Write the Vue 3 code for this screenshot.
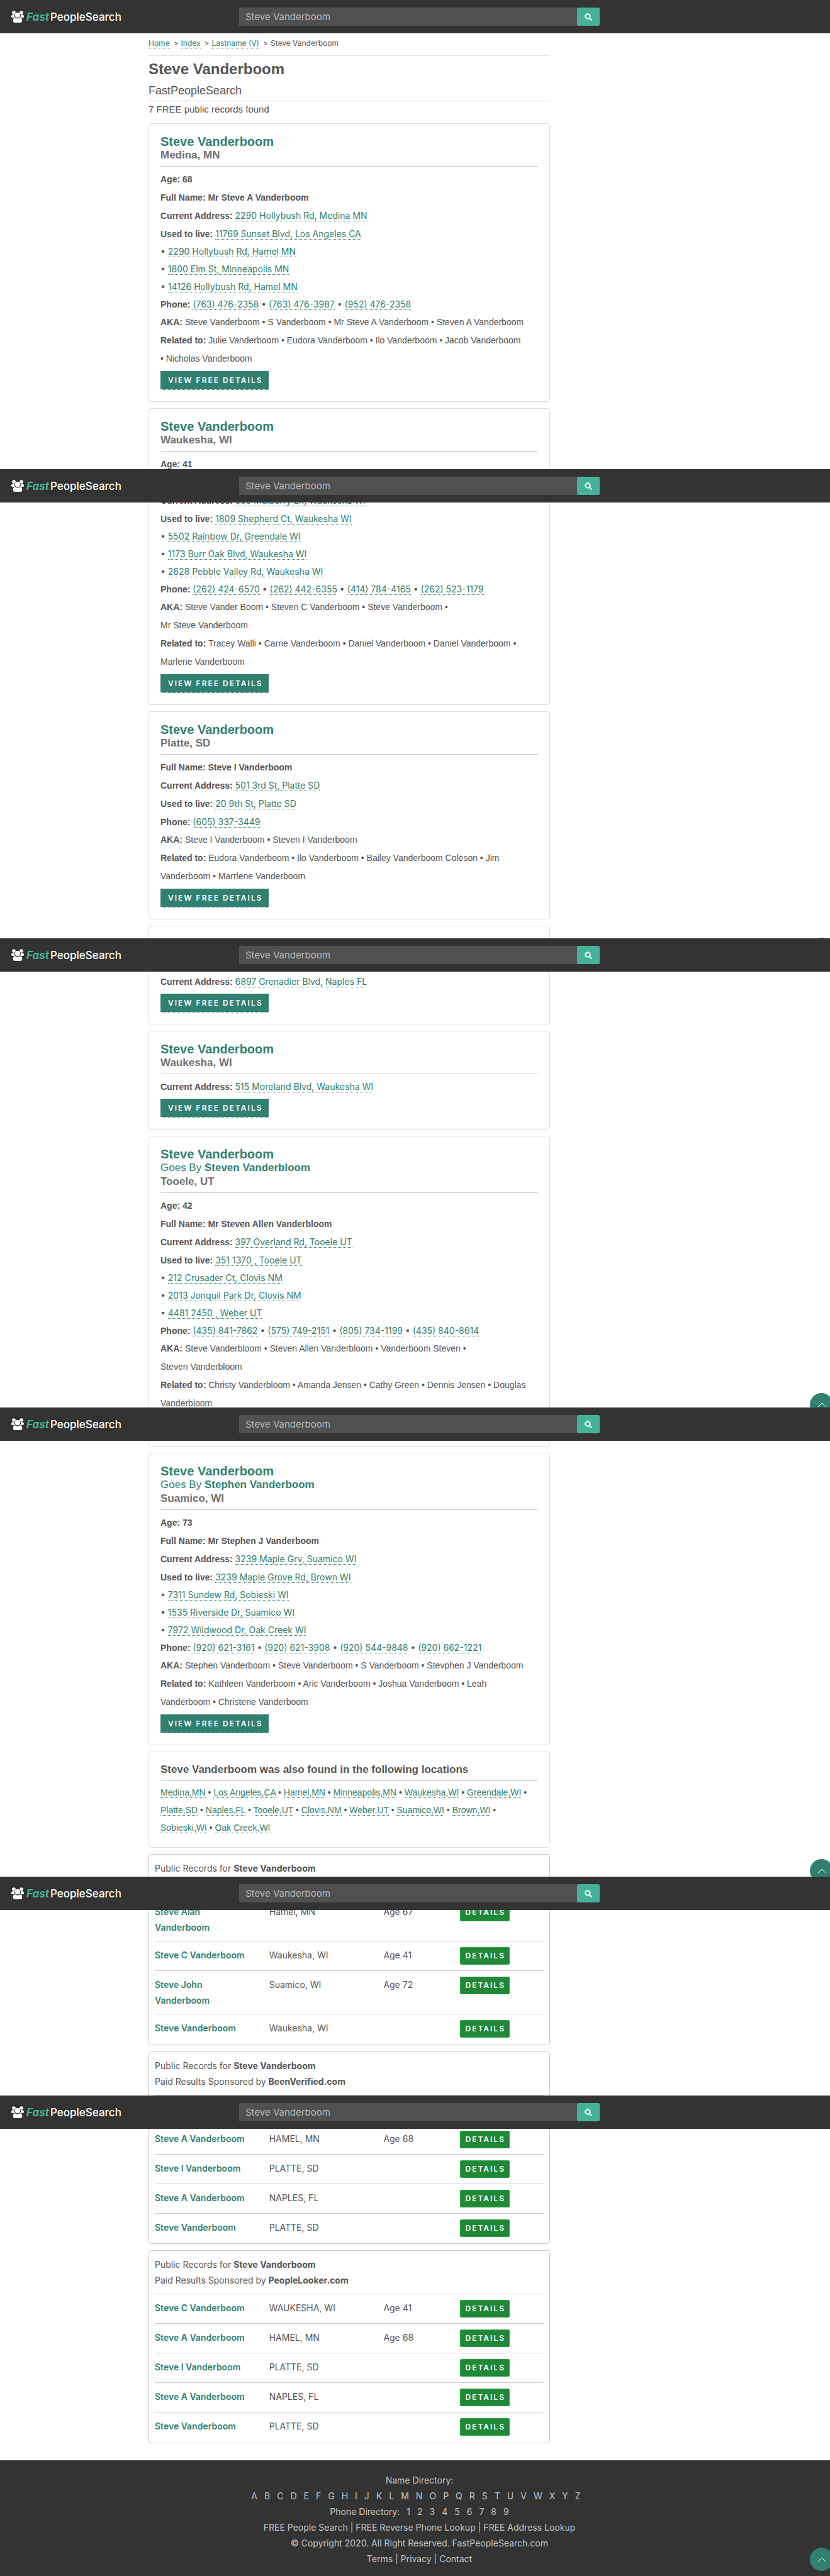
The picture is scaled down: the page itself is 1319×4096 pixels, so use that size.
<script setup>
const barTops = [0, 746, 1492, 2238, 2984, 3332]
const topButtons = [1491, 2215, 2956, 4051]

const people = [
  {
    name: 'Steve Vanderboom', place: 'Medina, MN', age: '68', full: 'Mr Steve A Vanderboom',
    current: '2290 Hollybush Rd, Medina MN',
    past: ['11769 Sunset Blvd, Los Angeles CA', '2290 Hollybush Rd, Hamel MN', '1800 Elm St, Minneapolis MN', '14126 Hollybush Rd, Hamel MN'],
    phones: ['(763) 476-2358', '(763) 476-3987', '(952) 476-2358'],
    aka: ['Steve Vanderboom', 'S Vanderboom', 'Mr Steve A Vanderboom', 'Steven A Vanderboom'],
    related: ['Julie Vanderboom', 'Eudora Vanderboom', 'Ilo Vanderboom', 'Jacob Vanderboom', 'Nicholas Vanderboom'],
    separator: ' •\u00a0',
    button: true
  },
  {
    name: 'Steve Vanderboom', place: 'Waukesha, WI', age: '41', gap: true,
    current: '555 Mulberry Ln, Waukesha WI',
    past: ['1809 Shepherd Ct, Waukesha WI', '5502 Rainbow Dr, Greendale WI', '1173 Burr Oak Blvd, Waukesha WI', '2628 Pebble Valley Rd, Waukesha WI'],
    phones: ['(262) 424-6570', '(262) 442-6355', '(414) 784-4165', '(262) 523-1179'],
    aka: ['Steve Vander Boom', 'Steven C Vanderboom', 'Steve Vanderboom', 'Mr Steve Vanderboom'],
    akaBreak: 3,
    related: ['Tracey Walli', 'Carrie Vanderboom', 'Daniel Vanderboom', 'Daniel Vanderboom', 'Marlene Vanderboom'],
    button: true
  },
  {
    name: 'Steve Vanderboom', place: 'Platte, SD', full: 'Steve I Vanderboom',
    current: '501 3rd St, Platte SD', past: ['20 9th St, Platte SD'], phones: ['(605) 337-3449'],
    aka: ['Steve I Vanderboom', 'Steven I Vanderboom'],
    related: ['Eudora Vanderboom', 'Ilo Vanderboom', 'Bailey Vanderboom Coleson', 'Jim Vanderboom', 'Marrlene Vanderboom'],
    button: true
  },
  { name: 'Steve Vanderboom', place: '', current: '6897 Grenadier Blvd, Naples FL', button: true },
  { name: 'Steve Vanderboom', place: 'Waukesha, WI', current: '515 Moreland Blvd, Waukesha WI', button: true },
  {
    name: 'Steve Vanderboom', goesBy: 'Steven Vanderbloom', place: 'Tooele, UT', age: '42', full: 'Mr Steven Allen Vanderbloom',
    current: '397 Overland Rd, Tooele UT',
    past: ['351 1370 , Tooele UT', '212 Crusader Ct, Clovis NM', '2013 Jonquil Park Dr, Clovis NM', '4481 2450 , Weber UT'],
    phones: ['(435) 841-7862', '(575) 749-2151', '(805) 734-1199', '(435) 840-8614'],
    aka: ['Steve Vanderbloom', 'Steven Allen Vanderbloom', 'Vanderboom Steven', 'Steven Vanderbloom'],
    akaBreak: 3,
    related: ['Christy Vanderbloom', 'Amanda Jensen', 'Cathy Green', 'Dennis Jensen', 'Douglas Vanderbloom'],
    button: false
  },
  {
    name: 'Steve Vanderboom', goesBy: 'Stephen Vanderboom', place: 'Suamico, WI', age: '73', full: 'Mr Stephen J Vanderboom',
    current: '3239 Maple Grv, Suamico WI',
    past: ['3239 Maple Grove Rd, Brown WI', '7311 Sundew Rd, Sobieski WI', '1535 Riverside Dr, Suamico WI', '7972 Wildwood Dr, Oak Creek WI'],
    phones: ['(920) 621-3161', '(920) 621-3908', '(920) 544-9848', '(920) 662-1221'],
    aka: ['Stephen Vanderboom', 'Steve Vanderboom', 'S Vanderboom', 'Stevphen J Vanderboom'],
    related: ['Kathleen Vanderboom', 'Aric Vanderboom', 'Joshua Vanderboom', 'Leah Vanderboom', 'Christene Vanderboom'],
    button: true
  }
]

const locations = ['Medina,MN', 'Los Angeles,CA', 'Hamel,MN', 'Minneapolis,MN', 'Waukesha,WI', 'Greendale,WI', 'Platte,SD', 'Naples,FL', 'Tooele,UT', 'Clovis,NM', 'Weber,UT', 'Suamico,WI', 'Brown,WI', 'Sobieski,WI', 'Oak Creek,WI']

const sponsors = [
  {
    sponsor: '',
    rows: [['Steve Alan Vanderboom', 'Hamel, MN', 'Age 67'], ['Steve C Vanderboom', 'Waukesha, WI', 'Age 41'], ['Steve John Vanderboom', 'Suamico, WI', 'Age 72'], ['Steve Vanderboom', 'Waukesha, WI', '']]
  },
  {
    sponsor: 'BeenVerified.com',
    rows: [null, ['Steve A Vanderboom', 'HAMEL, MN', 'Age 68'], ['Steve I Vanderboom', 'PLATTE, SD', ''], ['Steve A Vanderboom', 'NAPLES, FL', ''], ['Steve Vanderboom', 'PLATTE, SD', '']]
  },
  {
    sponsor: 'PeopleLooker.com',
    rows: [['Steve C Vanderboom', 'WAUKESHA, WI', 'Age 41'], ['Steve A Vanderboom', 'HAMEL, MN', 'Age 68'], ['Steve I Vanderboom', 'PLATTE, SD', ''], ['Steve A Vanderboom', 'NAPLES, FL', ''], ['Steve Vanderboom', 'PLATTE, SD', '']]
  }
]

const letters = 'ABCDEFGHIJKLMNOPQRSTUVWXYZ'.split('')
const digits = '123456789'.split('')
</script>

<template>
  <div class="page">
    <header v-for="(top, i) in barTops" :key="top" class="bar" :class="{ overlay: i > 0 }" :style="i > 0 ? { top: top + 'px' } : null">
      <a class="brand" href="#">
        <svg width="20" height="19" viewBox="0 0 20 19" fill="#fff" aria-hidden="true">
          <circle cx="4" cy="3" r="2.8" />
          <circle cx="16" cy="3" r="2.8" />
          <path d="M0 9.5C0 7.2 1.2 6 3 6h1.8c-.3 2.2.2 3.6 1.3 4.900H1.500C.6 10.900 0 10.400 0 9.500zM20 9.500C20 7.200 18.800 6 17 6h-1.800c.3 2.200-.2 3.600-1.300 4.900h4.600c.9 0 1.500-.5 1.500-1.400z" />
          <circle cx="10" cy="7.200" r="4.100" />
          <path d="M2.700 15.600c0-2.900 1.400-4.300 3.600-4.300 1 .9 2.200 1.300 3.700 1.300s2.700-.4 3.700-1.300c2.200 0 3.600 1.400 3.600 4.300 0 2.200-.9 3.300-2.700 3.300H5.400c-1.800 0-2.700-1.100-2.700-3.300z" />
        </svg>
        <span class="brand-text"><em>Fast</em>PeopleSearch</span>
      </a>
      <form class="search" role="search" @submit.prevent>
        <input :id="'q' + i" type="text" value="Steve Vanderboom" aria-label="Name" />
        <button type="submit" aria-label="Search">
          <svg width="12" height="12" viewBox="0 0 12 12" fill="none" stroke="#fff" stroke-width="2" stroke-linecap="round" aria-hidden="true">
            <circle cx="5" cy="5" r="3.700" />
            <path d="M8 8l3 3" />
          </svg>
        </button>
      </form>
    </header>

    <button v-for="y in topButtons" :key="y" type="button" class="to-top" aria-label="Back to top" :style="{ top: y + 'px' }">
      <svg width="14" height="8" viewBox="0 0 14 8" fill="none" stroke="#fff" stroke-width="1" aria-hidden="true"><path d="M1 7l6-6 6 6" /></svg>
    </button>

    <div class="columns">
      <main>
        <nav class="crumbs" aria-label="Breadcrumb">
          <a href="#">Home</a><i>&gt;</i><a href="#">Index</a><i>&gt;</i><a href="#">Lastname (V)</a><i>&gt;</i><span>Steve Vanderboom</span>
        </nav>
        <h1>Steve Vanderboom</h1>
        <p class="subtitle">FastPeopleSearch</p>
        <p class="count">7 FREE public records found</p>

        <article v-for="(p, i) in people" :key="i" class="card">
          <div class="card-head">
            <h2>{{ p.name }}</h2>
            <p v-if="p.goesBy" class="goes">Goes By <b>{{ p.goesBy }}</b></p>
            <p class="place">{{ p.place }}</p>
          </div>
          <p v-if="p.age" class="line"><b>Age: {{ p.age }}</b></p>
          <p v-if="p.full" class="line"><b>Full Name: {{ p.full }}</b></p>
          <p v-if="p.gap" class="line"></p>
          <p class="line"><b>Current Address:</b> <a href="#">{{ p.current }}</a></p>
          <template v-if="p.past">
            <p class="line"><b>Used to live:</b> <a href="#">{{ p.past[0] }}</a></p>
            <p v-for="a in p.past.slice(1)" :key="a" class="line short">• <a href="#">{{ a }}</a></p>
          </template>
          <p v-if="p.phones" class="line" :class="{ short: p.past.length > 1 }"><b>Phone: </b><template v-for="(t, k) in p.phones" :key="t">{{ k ? ' • ' : '' }}<a href="#">{{ t }}</a></template></p>
          <p v-if="p.aka" class="line names"><b>AKA: </b><template v-for="(t, k) in p.aka" :key="k">{{ k ? ' • ' : '' }}<br v-if="k && k === p.akaBreak" /><span class="whole">{{ t }}</span></template></p>
          <p v-if="p.related" class="line names"><b>Related to:</b> {{ p.related.join(p.separator || ' • ') }}</p>
          <div class="action"><a v-if="p.button" class="view" href="#">VIEW FREE DETAILS</a></div>
        </article>

        <section class="card places">
          <h3>Steve Vanderboom was also found in the following locations</h3>
          <p class="line short names"><template v-for="(t, k) in locations" :key="t">{{ k ? ' • ' : '' }}<a class="whole" href="#">{{ t }}</a></template></p>
        </section>

        <section v-for="(s, i) in sponsors" :key="i" class="records">
          <div class="records-head">
            <p>Public Records for <b>Steve Vanderboom</b></p>
            <p><template v-if="s.sponsor">Paid Results Sponsored by <b>{{ s.sponsor }}</b></template></p>
          </div>
          <table>
            <colgroup><col class="c-name" /><col class="c-city" /><col class="c-age" /><col /></colgroup>
            <tbody>
              <tr v-for="(r, k) in s.rows" :key="k">
                <template v-if="r">
                  <td><a class="person" href="#">{{ r[0] }}</a></td>
                  <td>{{ r[1] }}</td>
                  <td>{{ r[2] }}</td>
                  <td><a class="details" href="#">DETAILS</a></td>
                </template>
                <td v-else colspan="4"></td>
              </tr>
            </tbody>
          </table>
        </section>
      </main>
    </div>

    <footer>
      <p>Name Directory:</p>
      <p class="dir"><a v-for="l in letters" :key="l" href="#">{{ l }}</a></p>
      <p class="dir">Phone Directory:<a v-for="d in digits" :key="d" href="#" class="digit">{{ d }}</a></p>
      <p><a href="#">FREE People Search</a> | <a href="#">FREE Reverse Phone Lookup</a> | <a href="#">FREE Address Lookup</a></p>
      <p>© Copyright 2020. All Right Reserved. FastPeopleSearch.com</p>
      <p><a href="#">Terms</a> | <a href="#">Privacy</a> | <a href="#">Contact</a></p>
    </footer>
  </div>
</template>

<style>
body { margin: 0; background: #fff; }
</style>

<style scoped>
.page {
  position: relative;
  overflow: hidden;
  font-family: Inter, "Liberation Sans", sans-serif;
  font-size: 14px;
  color: #555;
}
.page * { box-sizing: border-box; }
p, h1, h2, h3 { margin: 0; }
a { color: #318070; text-decoration: none; }

.bar {
  display: grid;
  grid-template-columns: 380fr 573fr 366fr;
  align-items: center;
  height: 53px;
  background: #333;
}
.overlay { position: absolute; left: 0; right: 0; z-index: 2; }
.brand { display: flex; align-items: center; gap: 4px; padding-left: 18px; color: #fff; }
.brand-text { font-size: 17px; line-height: 24px; font-weight: 500; }
.brand em { margin-right: 2px; font-weight: 700; color: #44b198; }
.search { display: flex; height: 29px; }
.search input {
  flex: 1;
  min-width: 0;
  padding: 0 10px;
  border: 0;
  border-radius: 0;
  background: #505050;
  color: #b8b8b8;
  font: 15px Inter, sans-serif;
}
.search button {
  display: flex;
  align-items: center;
  justify-content: center;
  width: 36px;
  padding: 0;
  border: 0;
  border-radius: 2px;
  background: #44b198;
}

.to-top {
  position: absolute;
  right: -5px;
  z-index: 1;
  display: flex;
  align-items: center;
  justify-content: center;
  width: 37px;
  height: 37px;
  padding: 0;
  border: 0;
  border-radius: 50%;
  background: #318070;
}

.columns { display: grid; grid-template-columns: 236fr 638fr 445fr; }
main { grid-column: 2; min-width: 0; }

.crumbs {
  padding: 7px 0 10px;
  border-bottom: 1px solid #e5e5e5;
  font-size: 12px;
  line-height: 18px;
}
.crumbs i { margin: 0 4px 0 6px; font-style: normal; }
.crumbs a, .line a { border-bottom: 1px dotted #318070; }
h1, h2, h3, .subtitle, .count, .goes, .place, .line b { font-family: "Liberation Sans", sans-serif; }
h1 { margin-top: 7px; font-size: 24px; line-height: 28px; }
.subtitle {
  margin-top: 9px;
  padding-bottom: 5px;
  border-bottom: 1px solid #ccc;
  font-size: 18px;
  line-height: 22px;
}
.count { margin: 3px 0 12px; font-size: 15px; line-height: 20px; }

.card {
  margin-bottom: 10px;
  padding: 17px 18px 19px;
  border: 1px solid #ddd;
  border-radius: 4px;
}
.card-head { margin-bottom: 5px; padding-bottom: 6px; border-bottom: 1px solid #ccc; }
h2 { font-size: 20px; line-height: 22px; color: #318070; }
.goes, .place { min-height: 22px; font-size: 17px; line-height: 22px; }
.goes { color: #318070; }
.place { font-weight: 700; color: #717171; }
.line { min-height: 29px; line-height: 29px; }
.line b { line-height: 14px; }
.names { font-family: "Liberation Sans", sans-serif; }
.short { min-height: 28px; line-height: 28px; }
.whole { white-space: nowrap; }
.action { height: 29px; margin-top: 5px; }
.view {
  display: block;
  width: fit-content;
  height: 30px;
  padding: 0 10px 0 12px;
  border-bottom: 1px dotted #fff;
  background: #318070;
  color: #fff;
  font-size: 12px;
  font-weight: 600;
  line-height: 30px;
  letter-spacing: 2px;
}
.places { padding-bottom: 17px; }
h3 {
  margin-bottom: 4px;
  padding-bottom: 6px;
  border-bottom: 1px solid #ccc;
  font-size: 17px;
  line-height: 22px;
}

.records {
  margin-bottom: 10px;
  padding: 9px 9px 1px;
  border: 1px solid #c8c8c8;
  border-radius: 4px;
  line-height: 25px;
}
.records-head { padding-bottom: 9px; }
.records-head p { min-height: 25px; }
table { width: 100%; border-collapse: collapse; table-layout: fixed; }
.c-name, .c-city { width: 29.4%; }
.c-age { width: 19.6%; }
tr { height: 47px; border-top: 1px solid #ccc; }
td { padding: 9px 20px 9px 0; vertical-align: top; }
.person { font-weight: 600; }
.details {
  display: block;
  width: fit-content;
  padding: 0 6px 0 8px;
  border: 1px solid #28a745;
  border-radius: 2px;
  background: #218838;
  color: #fff;
  font-size: 12px;
  font-weight: 600;
  line-height: 26px;
  letter-spacing: 2px;
}

footer {
  margin-top: 17px;
  padding: 19px 0 16px 14px;
  background: #333;
  color: #c4c4c4;
  line-height: 25px;
  text-align: center;
}
footer a { color: inherit; }
.dir a { margin-right: 11px; }
.dir .digit { margin: 0 0 0 11px; }
</style>
